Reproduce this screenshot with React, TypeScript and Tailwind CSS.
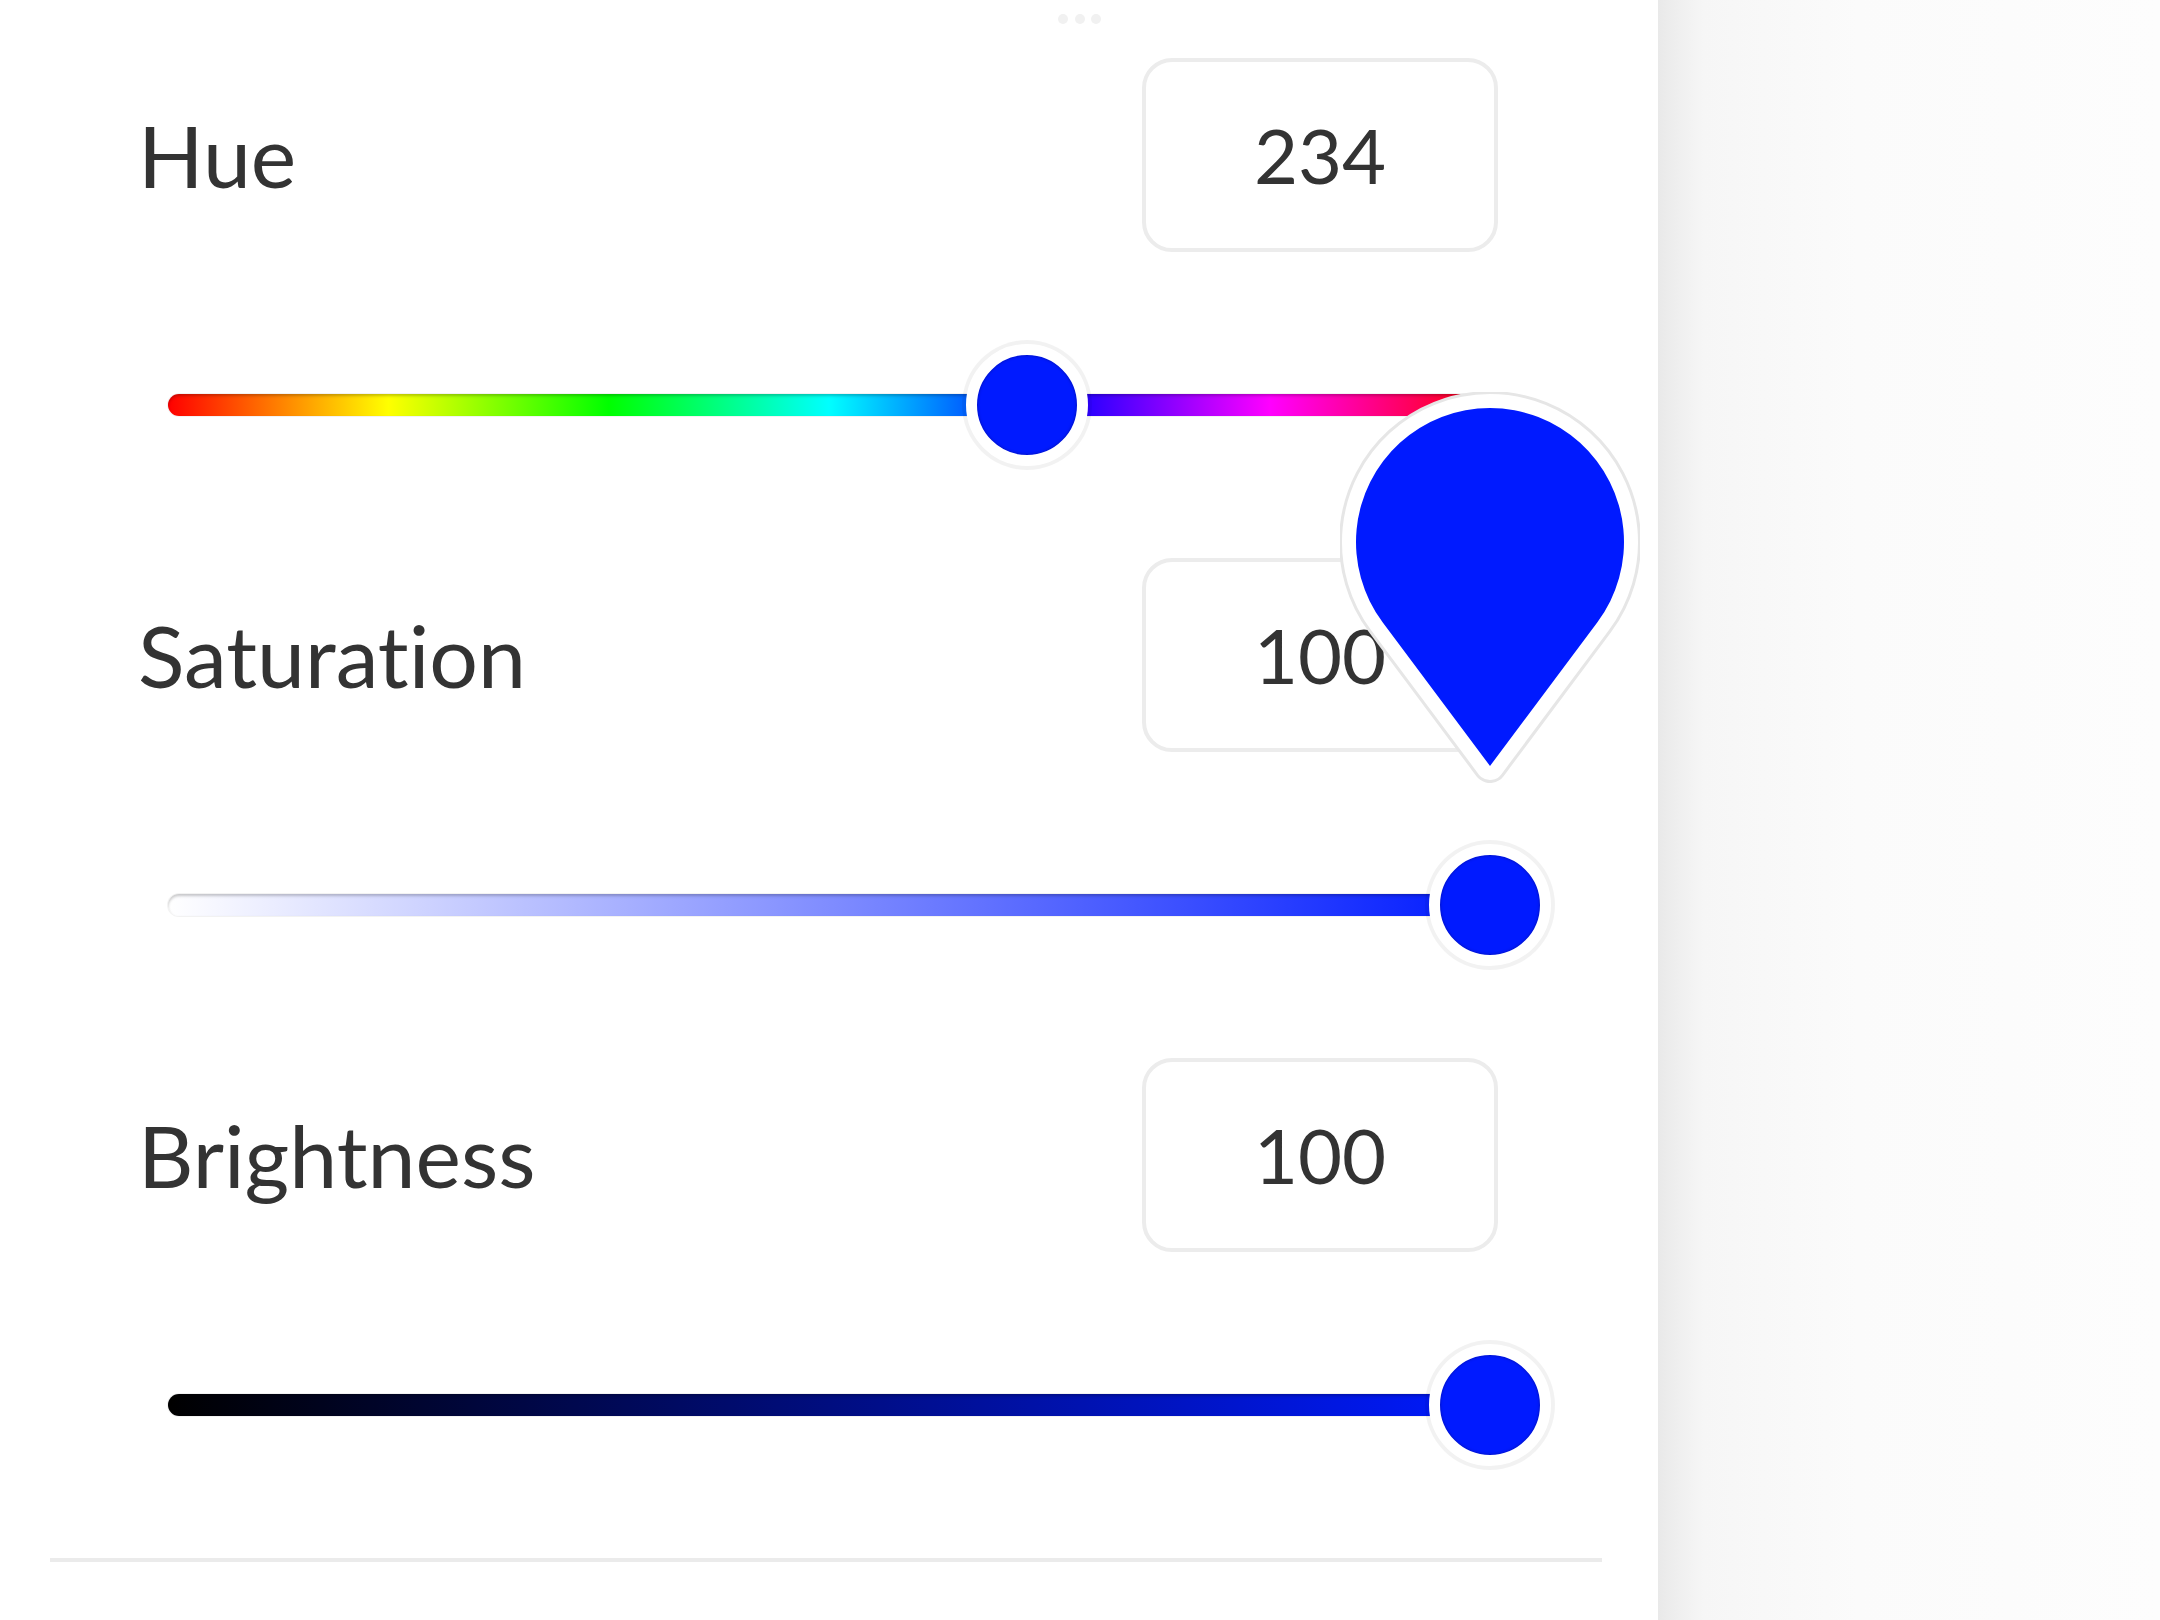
const BLUE = "#001aff";

const rows = [
  {
    label: "Hue",
    value: 234,
    pct: 65,
    track:
      "bg-[linear-gradient(to_right,#ff0000,#ffff00,#00ff00,#00ffff,#0000ff,#ff00ff,#ff0000)]",
  },
  {
    label: "Saturation",
    value: 100,
    pct: 100,
    track: "bg-[linear-gradient(to_right,#ffffff,#001aff)]",
    pin: true,
  },
  {
    label: "Brightness",
    value: 100,
    pct: 100,
    track: "bg-[linear-gradient(to_right,#000000,#001aff)]",
  },
];

function Teardrop() {
  // round head r=134 at (0,0), tangent sides down to the tip at (0,224)
  const d = "M0 224 L-107.4 80.2 A134 134 0 1 1 107.4 80.2 Z";
  return (
    <svg
      className="absolute right-[-150px] top-[-453px] z-10 h-[410px] w-[300px]"
      viewBox="-150 -150 300 410"
    >
      <path d={d} fill="none" stroke="#e6e6e6" strokeWidth={34} strokeLinejoin="round" />
      <path d={d} fill="#ffffff" stroke="#ffffff" strokeWidth={28} strokeLinejoin="round" />
      <path d={d} fill={BLUE} />
    </svg>
  );
}

function Slider({ pct, track, pin }: { pct: number; track: string; pin?: boolean }) {
  return (
    <div className="relative mx-[168px] flex h-[120px] items-center">
      <div
        className={`h-[22px] w-full rounded-full shadow-[inset_0_2px_3px_rgba(0,0,0,0.22),0_0_0_1px_rgba(0,0,0,0.05)] ${track}`}
      />
      <div
        className="absolute top-1/2 size-[122px] -translate-x-1/2 -translate-y-1/2 rounded-full border-[11px] border-white bg-[#001aff] shadow-[0_0_0_4px_rgba(0,0,0,0.05),inset_0_0_3px_rgba(0,0,60,0.5)]"
        style={{ left: `${pct}%` }}
      />
      {pin && <Teardrop />}
    </div>
  );
}

export default function App() {
  return (
    <div className="flex h-[1620px] w-[2160px] overflow-hidden bg-white font-['Lato','Open_Sans',sans-serif] text-[#333333] [font-variant-ligatures:none]">
      <div className="relative w-[1658px] shrink-0 bg-white pt-[58px]">
        <div className="absolute left-[1058px] top-[14px] flex gap-[6.5px]">
          <span className="size-[10px] rounded-full bg-[#f1f1f1]" />
          <span className="size-[10px] rounded-full bg-[#f1f1f1]" />
          <span className="size-[10px] rounded-full bg-[#f1f1f1]" />
        </div>

        <div className="flex flex-col gap-[93px]">
          {rows.map((row) => (
            <div key={row.label} className="flex flex-col gap-[93px]">
              <div className="flex h-[194px] items-center justify-between pl-[138px] pr-[160px]">
                <span className="text-[86px] leading-none">{row.label}</span>
                <div className="flex h-[194px] w-[356px] items-center justify-center rounded-[30px] border-[4px] border-[#ececec] bg-white">
                  <span className="text-[76px] leading-none">{row.value}</span>
                </div>
              </div>
              <Slider pct={row.pct} track={row.track} pin={row.pin} />
            </div>
          ))}

          <div className="ml-[50px] mr-[56px] h-[4px] bg-[#ebebeb]" />
        </div>
      </div>
      <div className="flex-1 bg-[linear-gradient(to_right,#e9e9e9,#f6f6f6_45px,#fbfbfb_200px,#fdfdfd)]" />
    </div>
  );
}
